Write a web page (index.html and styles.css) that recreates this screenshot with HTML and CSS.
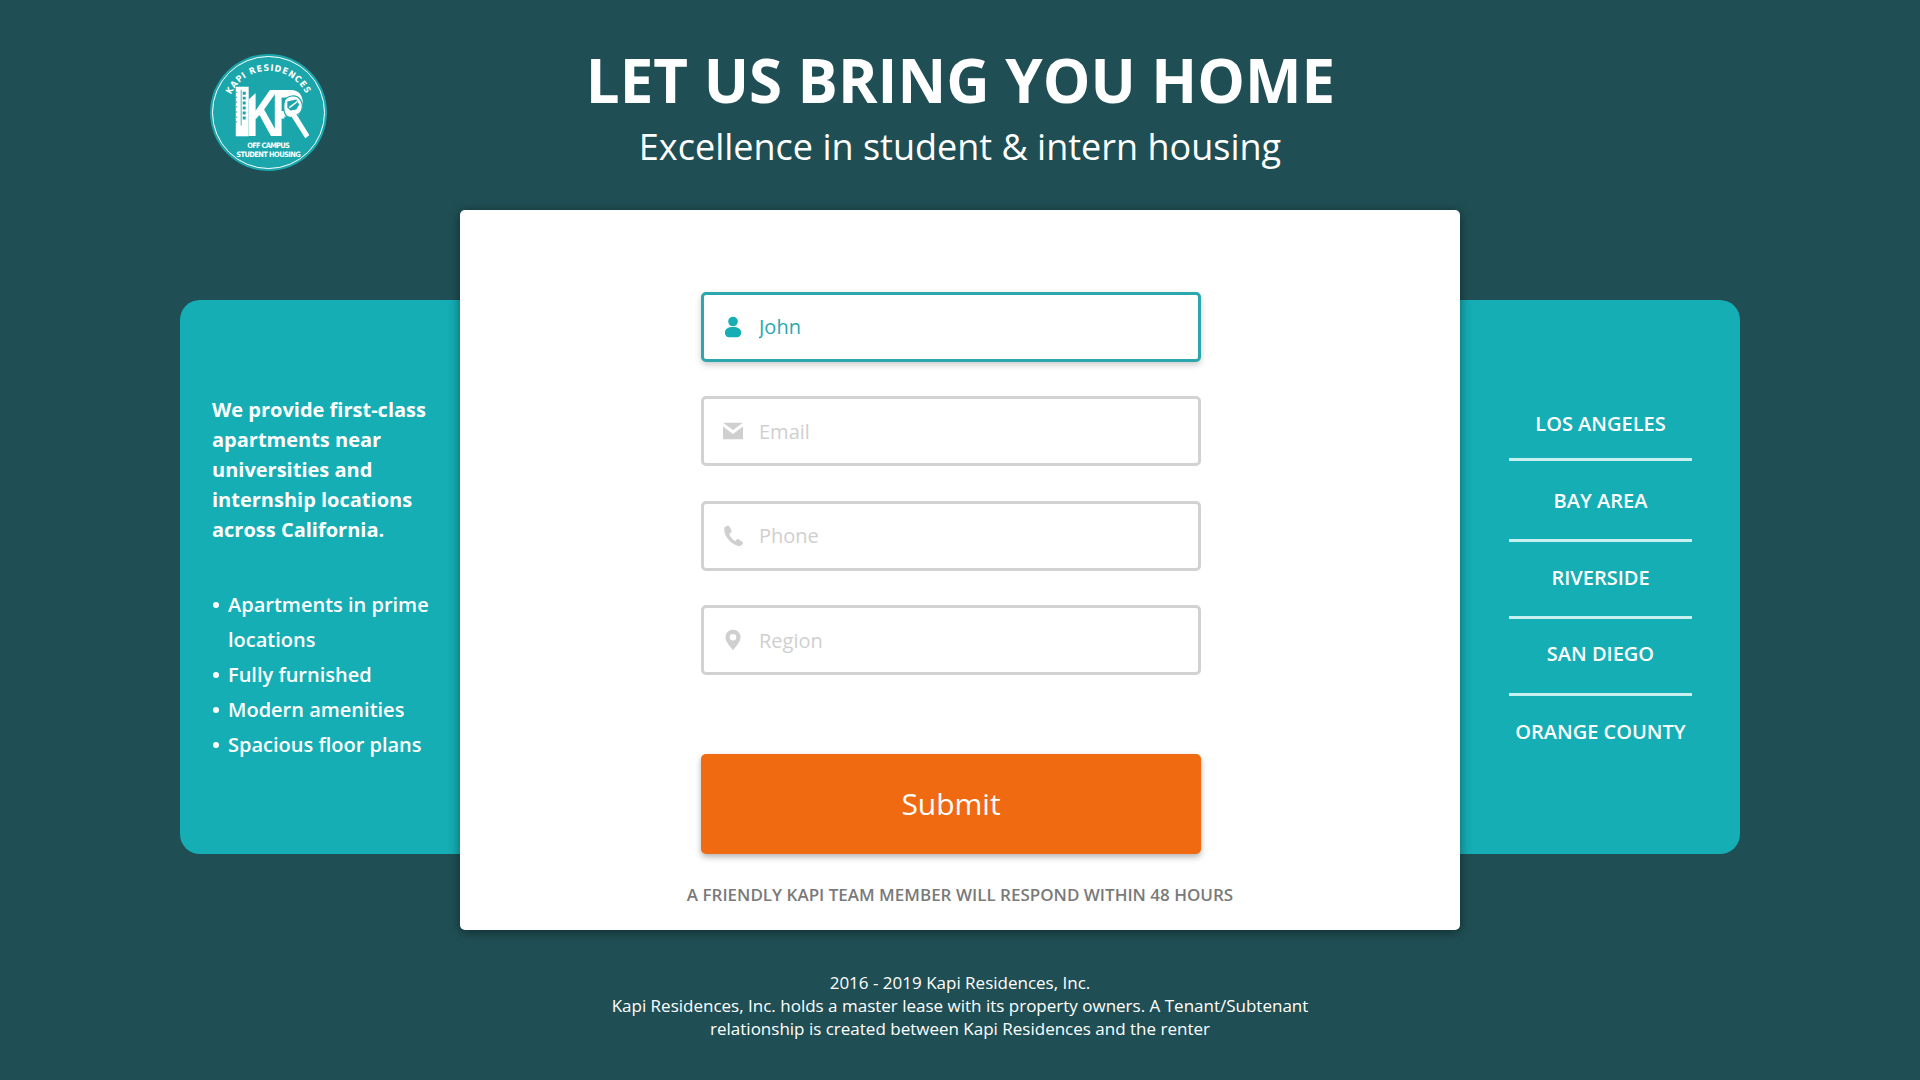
FILE: index.html
```html
<!DOCTYPE html>
<html lang="en">
<head>
<meta charset="utf-8">
<title>Kapi Residences</title>
<link rel="stylesheet" href="styles.css">
</head>
<body>
<header class="hero">
  <svg class="logo" viewBox="0 0 118 118" aria-label="Kapi Residences logo">
    <defs>
      <path id="arc" d="M17 59a42 42 0 0 1 84 0"/>
    </defs>
    <circle cx="59" cy="59" r="59" fill="#1aa6ab"/>
    <circle cx="59" cy="59" r="56.500" fill="none" stroke="#fff" stroke-width="1"/>
    <text class="logo-arc"><textPath href="#arc" startOffset="50%" text-anchor="middle">KAPI RESIDENCES</textPath></text>
    <text class="logo-kr" transform="translate(36 83) scale(.7 1)">KR</text>
    <path fill="#1aa6ab" d="M39 32h15L39 46zM75 63h28v22H75z"/>
    <path fill="#fff" d="M26 33h13v50H26z"/>
    <path fill="#1aa6ab" d="M26 38h1.500v1H26zM26 43h1.500v1H26zM26 48h1.500v1H26zM26 53h1.500v1H26zM26 58h1.500v1H26zM26 63h1.500v1H26zM26 68h1.500v1H26zM31 36h.8v36H31zM33 38h3v3h-3zM33 43h3v3h-3zM33 48h3v3h-3zM33 53h3v3h-3zM33 58h3v3h-3zM33 63h3v3h-3z"/>
    <path fill="#fff" stroke="#1aa6ab" stroke-width="1.200" d="M75 47c3-5 12-7 16-1 4 6 2 13-3 15l13 21-5 4-14-22c-6 0-9-5-7-17z"/>
    <path fill="#1aa6ab" d="M78 48l9-2 3 5-3 5-6 1-3-3z"/>
    <path fill="none" stroke="#fff" stroke-width="1.500" d="M80 54l8-6"/>
    <text class="logo-sub" x="37.500" y="95" textLength="43">OFF CAMPUS</text>
    <text class="logo-sub" x="26.500" y="104" textLength="65">STUDENT HOUSING</text>
  </svg>
  <div class="titles">
    <h1>LET US BRING YOU HOME</h1>
    <p class="subtitle">Excellence in student &amp; intern housing</p>
  </div>
</header>

<main class="stage">
  <aside class="panel panel-left">
    <p class="intro">We provide first-class apartments near universities and internship locations across California.</p>
    <ul class="perks">
      <li>Apartments in prime locations</li>
      <li>Fully furnished</li>
      <li>Modern amenities</li>
      <li>Spacious floor plans</li>
    </ul>
  </aside>

  <section class="card">
    <form class="form">
      <label class="field field-active">
        <svg class="icon" viewBox="0 0 24 24"><circle cx="12" cy="6.500" r="4.800"/><path d="M4 17c0-3 3-5 8-5s8 2 8 5v1.500c0 2.300-2 3.800-4 3.800H8c-2 0-4-1.500-4-3.800z"/></svg>
        <input class="input input-active" type="text" value="John" aria-label="Name">
      </label>
      <label class="field">
        <svg class="icon" viewBox="0 0 24 24"><path d="M2 3.700h20L12 11z"/><path d="M2 7.500v12.800h20V7.500L12 15z"/></svg>
        <input class="input" type="text" placeholder="Email">
      </label>
      <label class="field">
        <svg class="icon" viewBox="0 0 24 24"><path d="M5.500 2 3.300 3.500C2.300 10 7.700 19 17 22c2 .5 3.500-.4 4.700-2.200.5-.9.400-1.400-.5-2l-3.600-2.500c-.9-.5-1.400-.5-2 .3l-1.200 1.600C11.500 15.700 9 12.500 8.300 9.700l1.600-1.100c.8-.6.900-1.200.6-2L8.500 2.800C8 1.700 6.700 1.300 5.500 2z"/></svg>
        <input class="input" type="text" placeholder="Phone">
      </label>
      <label class="field">
        <svg class="icon" viewBox="0 0 24 24"><path fill-rule="evenodd" d="M12 1.700c-4.300 0-7.500 3.300-7.500 7.500 0 4.700 4.500 8.800 7.500 13.100 3-4.300 7.500-8.400 7.500-13.100 0-4.200-3.200-7.500-7.500-7.500zm0 4.300a3.300 3.300 0 1 1 0 6.600 3.300 3.300 0 0 1 0-6.600z"/></svg>
        <input class="input" type="text" placeholder="Region">
      </label>
      <button class="submit" type="button">Submit</button>
    </form>
    <p class="note">A FRIENDLY KAPI TEAM MEMBER WILL RESPOND WITHIN 48 HOURS</p>
  </section>

  <aside class="panel panel-right">
    <ul class="cities">
      <li>LOS ANGELES</li>
      <li>BAY AREA</li>
      <li>RIVERSIDE</li>
      <li>SAN DIEGO</li>
      <li>ORANGE COUNTY</li>
    </ul>
  </aside>
</main>

<footer class="footer">
  <p>2016 - 2019 Kapi Residences, Inc.</p>
  <p>Kapi Residences, Inc. holds a master lease with its property owners. A Tenant/Subtenant relationship is created between Kapi Residences and the renter</p>
</footer>
</body>
</html>
```
FILE: styles.css
```css
* { box-sizing: border-box; }
html, body { height: 100%; }
body {
  margin: 0;
  height: 1080px;
  overflow: hidden;
  background: #1f4f54;
  color: #fff;
  font-family: "Open Sans", "Liberation Sans", sans-serif;
}
p, ul, h1 { margin: 0; padding: 0; }
ul { list-style: none; }

.hero {
  height: 210px;
  display: grid;
  grid-template-columns: 1fr auto 1fr;
  padding-left: 210px;
  padding-right: 210px;
}
.logo { width: 117px; height: 117px; margin-top: 54px; }
.titles { text-align: center; padding-top: 39px; }
h1 { font-size: 60px; line-height: 82px; font-weight: 700; padding-left: 1px; }
.subtitle { font-size: 36px; line-height: 50px; margin-top: 1px; }

.logo-arc { font: 700 9px "Liberation Sans Narrow", "DejaVu Sans Condensed", sans-serif; letter-spacing: .9px; fill: #fff; }
.logo-kr { font: 700 67px "Liberation Sans", sans-serif; letter-spacing: -11px; fill: #fff; }
.logo-sub { font: 700 7.500px "Liberation Sans Narrow", "DejaVu Sans Condensed", sans-serif; fill: #fff; }

.stage {
  display: grid;
  grid-template-columns: 280px 1000px 280px;
  margin-left: 180px;
  width: 1560px;
  height: 720px;
}
.panel {
  margin-top: 90px;
  height: 554px;
  background: #15aeb5;
}
.panel-left { border-radius: 20px 0 0 20px; padding: 94.500px 20px 0 32px; }
.panel-right { border-radius: 0 20px 20px 0; padding: 88px 48px 0 49px; }

.intro { font-size: 20px; line-height: 30px; font-weight: 700; }
.perks { margin-top: 42px; font-size: 20px; line-height: 35px; font-weight: 600; }
.perks li { position: relative; padding-left: 16px; }
.perks li::before {
  content: "";
  position: absolute;
  left: 1px;
  top: 15px;
  width: 6px;
  height: 6px;
  border-radius: 50%;
  background: #fff;
}

.cities { text-align: center; font-size: 20px; font-weight: 600; line-height: 27px; }
.cities li { padding: 22px 0 25px; border-bottom: 3px solid #c9eff0; }
.cities li:first-child { padding-bottom: 21px; }
.cities li:nth-child(2) { padding-top: 26px; }
.cities li:nth-child(4) { padding: 21px 0 26px; }
.cities li:last-child { border-bottom: 0; }

.card {
  position: relative;
  background: #fff;
  border-radius: 5px;
  box-shadow: 0 2px 12px rgba(0, 0, 0, .45);
  padding: 81.500px 0 0;
}
.form { width: 500px; margin-left: 241px; display: flex; flex-direction: column; }
.field {
  height: 70px;
  margin-bottom: 34.500px;
  display: flex;
  align-items: center;
  padding-left: 17px;
  border: 3px solid #d2d2d2;
  border-radius: 5px;
  background: #fff;
  fill: #cfcfcf;
}
.field-active {
  border-color: #2ba7ad;
  box-shadow: 0 3px 6px rgba(0, 0, 0, .2);
  fill: #15aeb5;
}
.icon { width: 24px; height: 24px; flex: none; }
.input {
  flex: 1;
  min-width: 0;
  margin-left: 14px;
  border: 0;
  padding: 0;
  outline: 0;
  background: transparent;
  font: 400 20px "Open Sans", sans-serif;
  color: #999;
}
.input::placeholder { color: #cfcfcf; opacity: 1; }
.input-active { color: #2ba7ad; }

.submit {
  height: 100px;
  margin-top: 44.500px;
  padding: 0 0 2px;
  border: 0;
  border-radius: 5px;
  background: #ef6a11;
  color: #fff;
  font: 400 30px "Open Sans", sans-serif;
  box-shadow: 0 3px 6px rgba(0, 0, 0, .3);
}
.note {
  margin-top: 29px;
  text-align: center;
  font-size: 17px;
  line-height: 23px;
  font-weight: 600;
  color: #7a7a7a;
}

.footer {
  width: 720px;
  margin: 41px auto 0;
  text-align: center;
  font-size: 17px;
  line-height: 23px;
}
```
